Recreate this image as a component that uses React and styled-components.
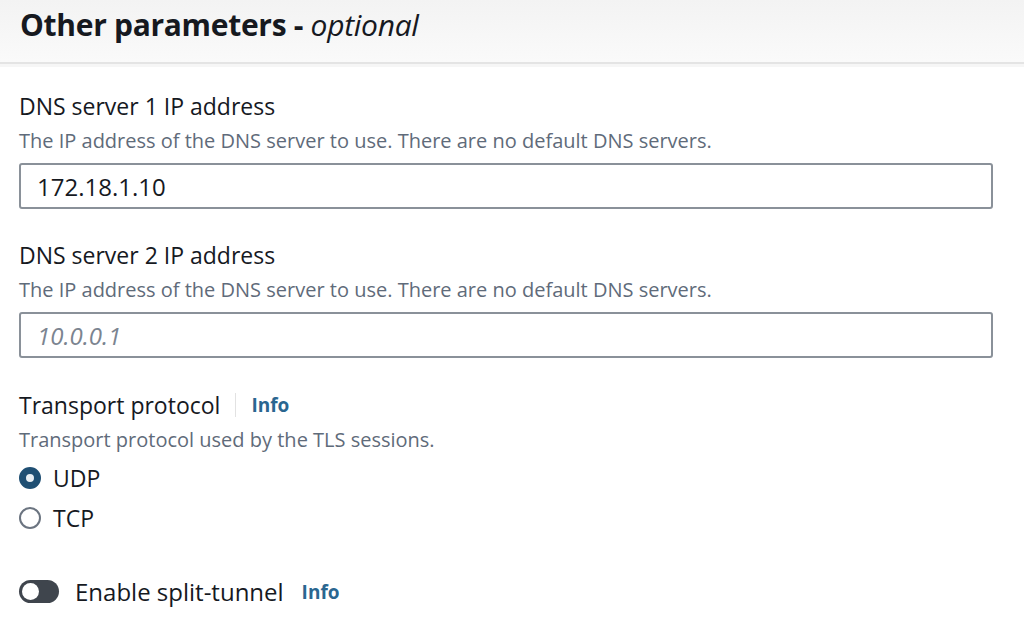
import React from 'react'
import styled, { createGlobalStyle } from 'styled-components'

const Global = createGlobalStyle`
  html, body {
    margin: 0;
    padding: 0;
    background: #ffffff;
  }
  body {
    font-family: 'Open Sans', 'Noto Sans', 'Liberation Sans', sans-serif;
    color: #16191f;
  }
`

const Page = styled.div`
  width: 1024px;
  height: 628px;
  overflow: hidden;
  background: #fff;
`

const Header = styled.div`
  height: 62px;
  padding: 0 20px;
  display: flex;
  align-items: center;
  background: linear-gradient(#f3f3f3, #fafafa);
  border-bottom: 2px solid #e4e4e4;
  box-shadow: 0 3px 0 #f6f6f6;
  h2 {
    margin: 0;
    margin-top: -14px;
    font-size: 30px;
    font-weight: 700;
    letter-spacing: -0.3px;
    em {
      font-weight: 400;
      font-style: italic;
    }
  }
`

const Body = styled.div`
  padding: 27px 31px 0 19px;
  display: flex;
  flex-direction: column;
`

const Field = styled.div`
  display: flex;
  flex-direction: column;
  margin-bottom: ${p => p.gap ?? 31}px;
`

const LabelRow = styled.div`
  display: flex;
  align-items: center;
  height: 30px;
`

const Label = styled.span`
  font-size: 23px;
  color: #16191f;
`

const Divider = styled.span`
  width: 1px;
  height: 24px;
  background: #e2e2e2;
  margin: 0 15px;
`

const InfoLink = styled.span`
  font-size: 19px;
  font-weight: 700;
  color: #2a6690;
  margin-left: ${p => p.ml || 0}px;
`

const Desc = styled.div`
  font-size: 20px;
  color: #5f6b7a;
  margin-top: 8px;
  line-height: 24px;
`

const Input = styled.div`
  margin-top: 10px;
  height: 46px;
  box-sizing: border-box;
  border: 2px solid #8a9199;
  border-radius: 3px;
  display: flex;
  align-items: center;
  padding: 0 16px;
  font-size: 24px;
  color: ${p => (p.placeholder ? '#7b8490' : '#16191f')};
  font-style: ${p => (p.placeholder ? 'italic' : 'normal')};
`

const Radios = styled.div`
  display: flex;
  flex-direction: column;
  gap: 18px;
  margin-top: 15px;
`

const RadioRow = styled.label`
  display: flex;
  align-items: center;
  gap: 12px;
  font-size: 23px;
  height: 22px;
`

const Radio = styled.span`
  width: 22px;
  height: 22px;
  box-sizing: border-box;
  border-radius: 50%;
  border: ${p => (p.checked ? '7px solid #1f4f73' : '2px solid #6b7480')};
  background: ${p => (p.checked ? '#e8eef3' : '#fff')};
`

const ToggleRow = styled.div`
  display: flex;
  align-items: center;
  margin-top: 46px;
  font-size: 24px;
`

const Toggle = styled.span`
  width: 40px;
  height: 23px;
  border-radius: 12px;
  background: #3f454d;
  display: flex;
  align-items: center;
  padding: 0 3px;
  box-sizing: border-box;
  margin-right: 16px;
  &::before {
    content: '';
    width: 17px;
    height: 17px;
    border-radius: 50%;
    background: #fff;
  }
`

export default function App() {
  return (
    <Page>
      <Global />
      <Header>
        <h2>
          Other parameters - <em>optional</em>
        </h2>
      </Header>
      <Body>
        <Field>
          <LabelRow>
            <Label>DNS server 1 IP address</Label>
          </LabelRow>
          <Desc>The IP address of the DNS server to use. There are no default DNS servers.</Desc>
          <Input>172.18.1.10</Input>
        </Field>
        <Field gap={32}>
          <LabelRow>
            <Label>DNS server 2 IP address</Label>
          </LabelRow>
          <Desc>The IP address of the DNS server to use. There are no default DNS servers.</Desc>
          <Input placeholder>10.0.0.1</Input>
        </Field>
        <Field gap={0}>
          <LabelRow>
            <Label>Transport protocol</Label>
            <Divider />
            <InfoLink>Info</InfoLink>
          </LabelRow>
          <Desc>Transport protocol used by the TLS sessions.</Desc>
          <Radios>
            <RadioRow>
              <Radio checked />
              UDP
            </RadioRow>
            <RadioRow>
              <Radio />
              TCP
            </RadioRow>
          </Radios>
        </Field>
        <ToggleRow>
          <Toggle />
          Enable split-tunnel
          <InfoLink ml={18}>Info</InfoLink>
        </ToggleRow>
      </Body>
    </Page>
  )
}
